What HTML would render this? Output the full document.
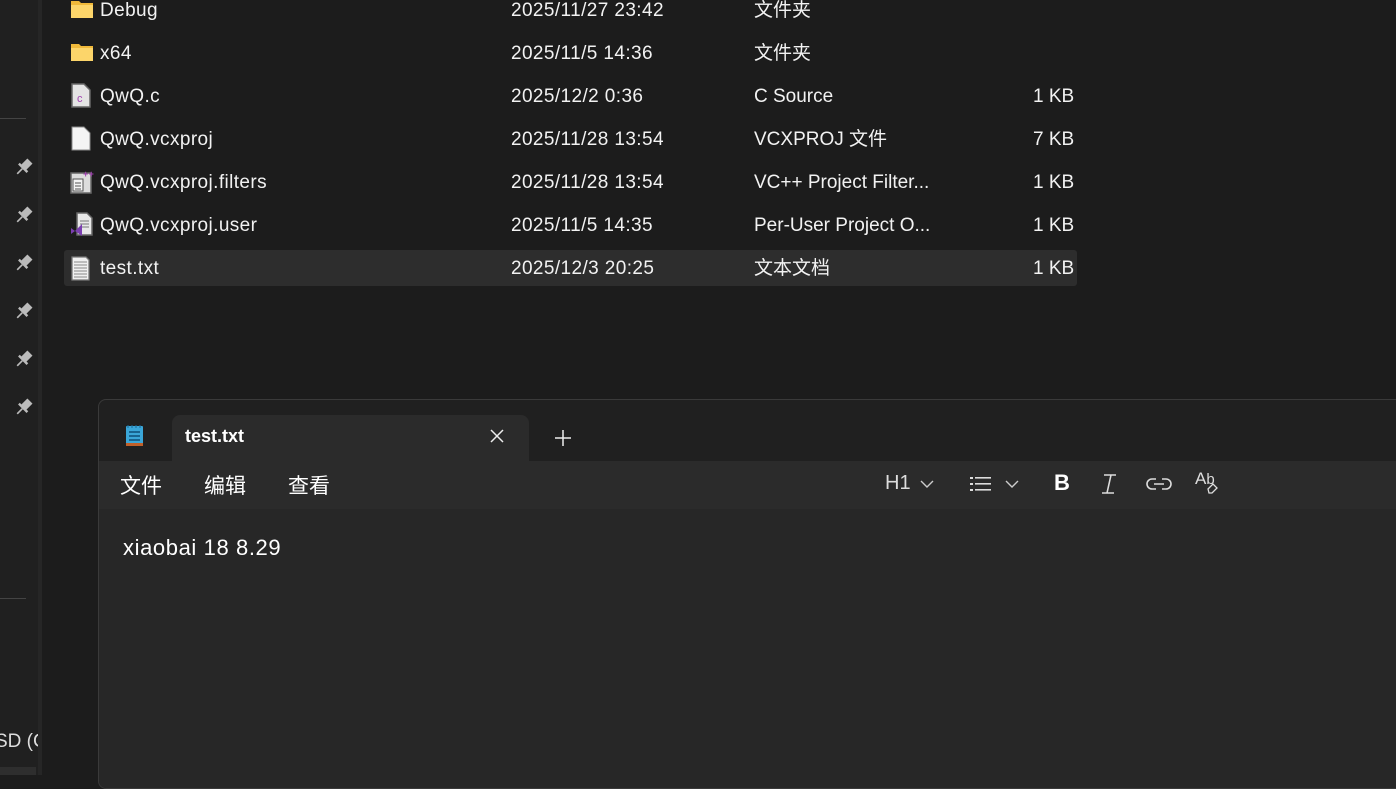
<!DOCTYPE html>
<html><head><meta charset="utf-8"><style>
*{margin:0;padding:0;box-sizing:border-box}
body{width:1396px;height:775px;overflow:hidden;background:#1c1c1c;font-family:"Segoe UI","Liberation Sans","Noto Sans CJK SC",sans-serif;color:#fff;position:relative}
.side{position:absolute;left:0;top:0;width:38px;height:775px;background:#202020;overflow:hidden}
.sep{position:absolute;left:38px;top:0;width:4px;height:775px;background:#262626}
.hl{position:absolute;left:0;width:26px;height:1px;background:#444}
.row{position:absolute;left:64px;width:1013px;height:36px;font-size:19px;line-height:38px;letter-spacing:0.4px;color:#f2f2f2}
.row span{position:absolute;white-space:nowrap}
.n{left:36px}.d{left:447px}.t{left:690px;letter-spacing:0}.s{left:969px;letter-spacing:0}
.ic{position:absolute;left:6px;top:8px}
.win{position:absolute;left:98px;top:399px;width:1310px;height:390px;background:#202020;border:1px solid #3a3a3a;border-radius:8px;overflow:hidden}
.tab{position:absolute;left:73px;top:15px;width:357px;height:46px;background:#2b2b2b;border-radius:8px 8px 0 0}
.menu{position:absolute;left:0;top:61px;width:100%;height:48px;background:#2b2b2b}
.content{position:absolute;left:0;top:109px;width:100%;height:300px;background:#272727}
</style></head><body>
<div class="side">
<div class="hl" style="top:118px"></div>
<div class="hl" style="top:598px"></div>
<div style="position:absolute;left:-5px;top:731px;font-size:19px;color:#ddd;white-space:nowrap">SD (C</div>
<div style="position:absolute;left:0;top:767px;width:36px;height:8px;background:#2e2e2e"></div>
</div>
<div class="sep"></div>
<svg style="position:absolute;left:0;top:0" width="40" height="430">
<g fill="#bbb">
<g transform="translate(24,167) rotate(45) scale(1.2)"><rect x="-3" y="-7" width="6" height="8"/><rect x="-5" y="0" width="10" height="2"/><rect x="-0.7" y="2" width="1.4" height="6"/></g>
<g transform="translate(24,215) rotate(45) scale(1.2)"><rect x="-3" y="-7" width="6" height="8"/><rect x="-5" y="0" width="10" height="2"/><rect x="-0.7" y="2" width="1.4" height="6"/></g>
<g transform="translate(24,263) rotate(45) scale(1.2)"><rect x="-3" y="-7" width="6" height="8"/><rect x="-5" y="0" width="10" height="2"/><rect x="-0.7" y="2" width="1.4" height="6"/></g>
<g transform="translate(24,311) rotate(45) scale(1.2)"><rect x="-3" y="-7" width="6" height="8"/><rect x="-5" y="0" width="10" height="2"/><rect x="-0.7" y="2" width="1.4" height="6"/></g>
<g transform="translate(24,359) rotate(45) scale(1.2)"><rect x="-3" y="-7" width="6" height="8"/><rect x="-5" y="0" width="10" height="2"/><rect x="-0.7" y="2" width="1.4" height="6"/></g>
<g transform="translate(24,407) rotate(45) scale(1.2)"><rect x="-3" y="-7" width="6" height="8"/><rect x="-5" y="0" width="10" height="2"/><rect x="-0.7" y="2" width="1.4" height="6"/></g>
</g></svg>

<div class="row" style="top:-8px"><svg class="ic" width="24" height="20" style="top:8px"><path d="M1 1h8l2 2h12v15H1z" fill="#f0b93a"/><rect x="1" y="5" width="22" height="13" fill="#fcd56a"/></svg><span class="n">Debug</span><span class="d">2025/11/27 23:42</span><span class="t">文件夹</span></div>
<div class="row" style="top:35px"><svg class="ic" width="24" height="20" style="top:8px"><path d="M1 1h8l2 2h12v15H1z" fill="#f0b93a"/><rect x="1" y="5" width="22" height="13" fill="#fcd56a"/></svg><span class="n">x64</span><span class="d">2025/11/5 14:36</span><span class="t">文件夹</span></div>
<div class="row" style="top:78px"><svg class="ic" width="24" height="26" style="top:5px"><path d="M2 1h12l6 6v17H2z" fill="#e4e4e4" stroke="#666" stroke-width="1.5"/><text x="7" y="19" font-size="11" fill="#a040b0" font-family="Liberation Sans">c</text></svg><span class="n">QwQ.c</span><span class="d">2025/12/2 0:36</span><span class="t">C Source</span><span class="s">1 KB</span></div>
<div class="row" style="top:121px"><svg class="ic" width="24" height="26" style="top:5px"><path d="M2 1h12l6 6v17H2z" fill="#f4f4f4" stroke="#888"/></svg><span class="n">QwQ.vcxproj</span><span class="d">2025/11/28 13:54</span><span class="t">VCXPROJ 文件</span><span class="s">7 KB</span></div>
<div class="row" style="top:164px"><svg class="ic" width="26" height="26" style="top:5px"><rect x="1" y="4" width="20" height="20" fill="#ddd" stroke="#666" stroke-width="1.5"/><rect x="3" y="10" width="10" height="12" fill="#f4f4f4" stroke="#555"/><g stroke="#555"><path d="M5 14h6M5 17h6M5 20h6"/></g><text x="13" y="8" font-size="9" fill="#a040b0" font-weight="bold">++</text></svg><span class="n">QwQ.vcxproj.filters</span><span class="d">2025/11/28 13:54</span><span class="t">VC++ Project Filter...</span><span class="s">1 KB</span></div>
<div class="row" style="top:207px"><svg class="ic" width="26" height="26" style="top:5px"><path d="M7 1h10l5 5v17H7z" fill="#e8e8e8" stroke="#666" stroke-width="1.5"/><g stroke="#777"><path d="M10 9h9M10 12h9M10 15h9"/></g><path d="M1 16l4 3 7-7v12l-7-5-4 3z" fill="#7b3fb0"/></svg><span class="n">QwQ.vcxproj.user</span><span class="d">2025/11/5 14:35</span><span class="t">Per-User Project O...</span><span class="s">1 KB</span></div>
<div class="row" style="top:250px;background:#2d2d2d;border-radius:3px"><svg class="ic" width="24" height="26" style="top:6px"><path d="M2 1h14l3 3v20H2z" fill="#f0f0f0" stroke="#777" stroke-width="1.3"/><g stroke="#888"><path d="M4 6h13M4 9h13M4 12h13M4 15h13M4 18h13M4 21h13"/></g></svg><span class="n">test.txt</span><span class="d">2025/12/3 20:25</span><span class="t">文本文档</span><span class="s">1 KB</span></div>

<div class="win">
<svg style="position:absolute;left:25px;top:24px" width="22" height="24"><rect x="2" y="2" width="17" height="20" rx="1" fill="#3aa6d8"/><rect x="2" y="19" width="17" height="3" fill="#c0602a"/><g stroke="#0d4f78" stroke-width="1.6"><path d="M5 8h11M5 12h11M5 16h11"/></g><path d="M4 1v3M8 1v3M12 1v3M16 1v3" stroke="#1a6a98"/></svg>
<div class="tab"><span style="position:absolute;left:13px;top:11px;font-size:18px;font-weight:bold">test.txt</span>
<svg style="position:absolute;left:317px;top:13px" width="16" height="16"><path d="M2 2l12 12M14 2L2 14" stroke="#eee" stroke-width="1.5"/></svg></div>
<svg style="position:absolute;left:455px;top:29px" width="18" height="18"><path d="M9 1v16M1 9h16" stroke="#eee" stroke-width="1.5"/></svg>
<div class="menu">
<span style="position:absolute;left:21px;top:9px;font-size:21px">文件</span>
<span style="position:absolute;left:105px;top:9px;font-size:21px">编辑</span>
<span style="position:absolute;left:189px;top:9px;font-size:21px">查看</span>
<span style="position:absolute;left:786px;top:11px;font-size:20px;color:#ddd">H1</span>
<svg style="position:absolute;left:820px;top:17px" width="16" height="12"><path d="M2 3l6 6 6-6" stroke="#ccc" fill="none" stroke-width="1.4"/></svg>
<svg style="position:absolute;left:870px;top:14px" width="24" height="18"><g fill="#ddd"><rect x="1" y="2" width="3" height="2"/><rect x="1" y="8" width="3" height="2"/><rect x="1" y="14" width="3" height="2"/><rect x="6" y="2" width="16" height="1.6"/><rect x="6" y="8" width="16" height="1.6"/><rect x="6" y="14" width="16" height="1.6"/></g></svg>
<svg style="position:absolute;left:905px;top:17px" width="16" height="12"><path d="M2 3l6 6 6-6" stroke="#ccc" fill="none" stroke-width="1.4"/></svg>
<span style="position:absolute;left:955px;top:9px;font-size:22px;font-weight:bold;font-family:'Liberation Sans'">B</span>
<svg style="position:absolute;left:1000px;top:12px" width="20" height="22"><path d="M5 2h12M3 20h12M12 2L8 20" stroke="#ddd" stroke-width="1.6" fill="none"/></svg>
<svg style="position:absolute;left:1047px;top:14px" width="26" height="18"><path d="M10 4H6a5 5 0 0 0 0 10h4M16 4h4a5 5 0 0 1 0 10h-4M8 9h10" stroke="#ddd" stroke-width="1.6" fill="none"/></svg>
<span style="position:absolute;left:1096px;top:8px;font-size:17px;color:#ddd">A<span style="font-size:15px">b</span></span>
<svg style="position:absolute;left:1106px;top:20px" width="14" height="14"><path d="M3 8l5-5 4 4-5 5H4z" stroke="#ddd" fill="#2b2b2b" stroke-width="1.3"/></svg>
</div>
<div class="content"><span style="position:absolute;left:24px;top:26px;font-size:22px;letter-spacing:0.6px">xiaobai 18 8.29</span></div>
</div>
</body></html>
